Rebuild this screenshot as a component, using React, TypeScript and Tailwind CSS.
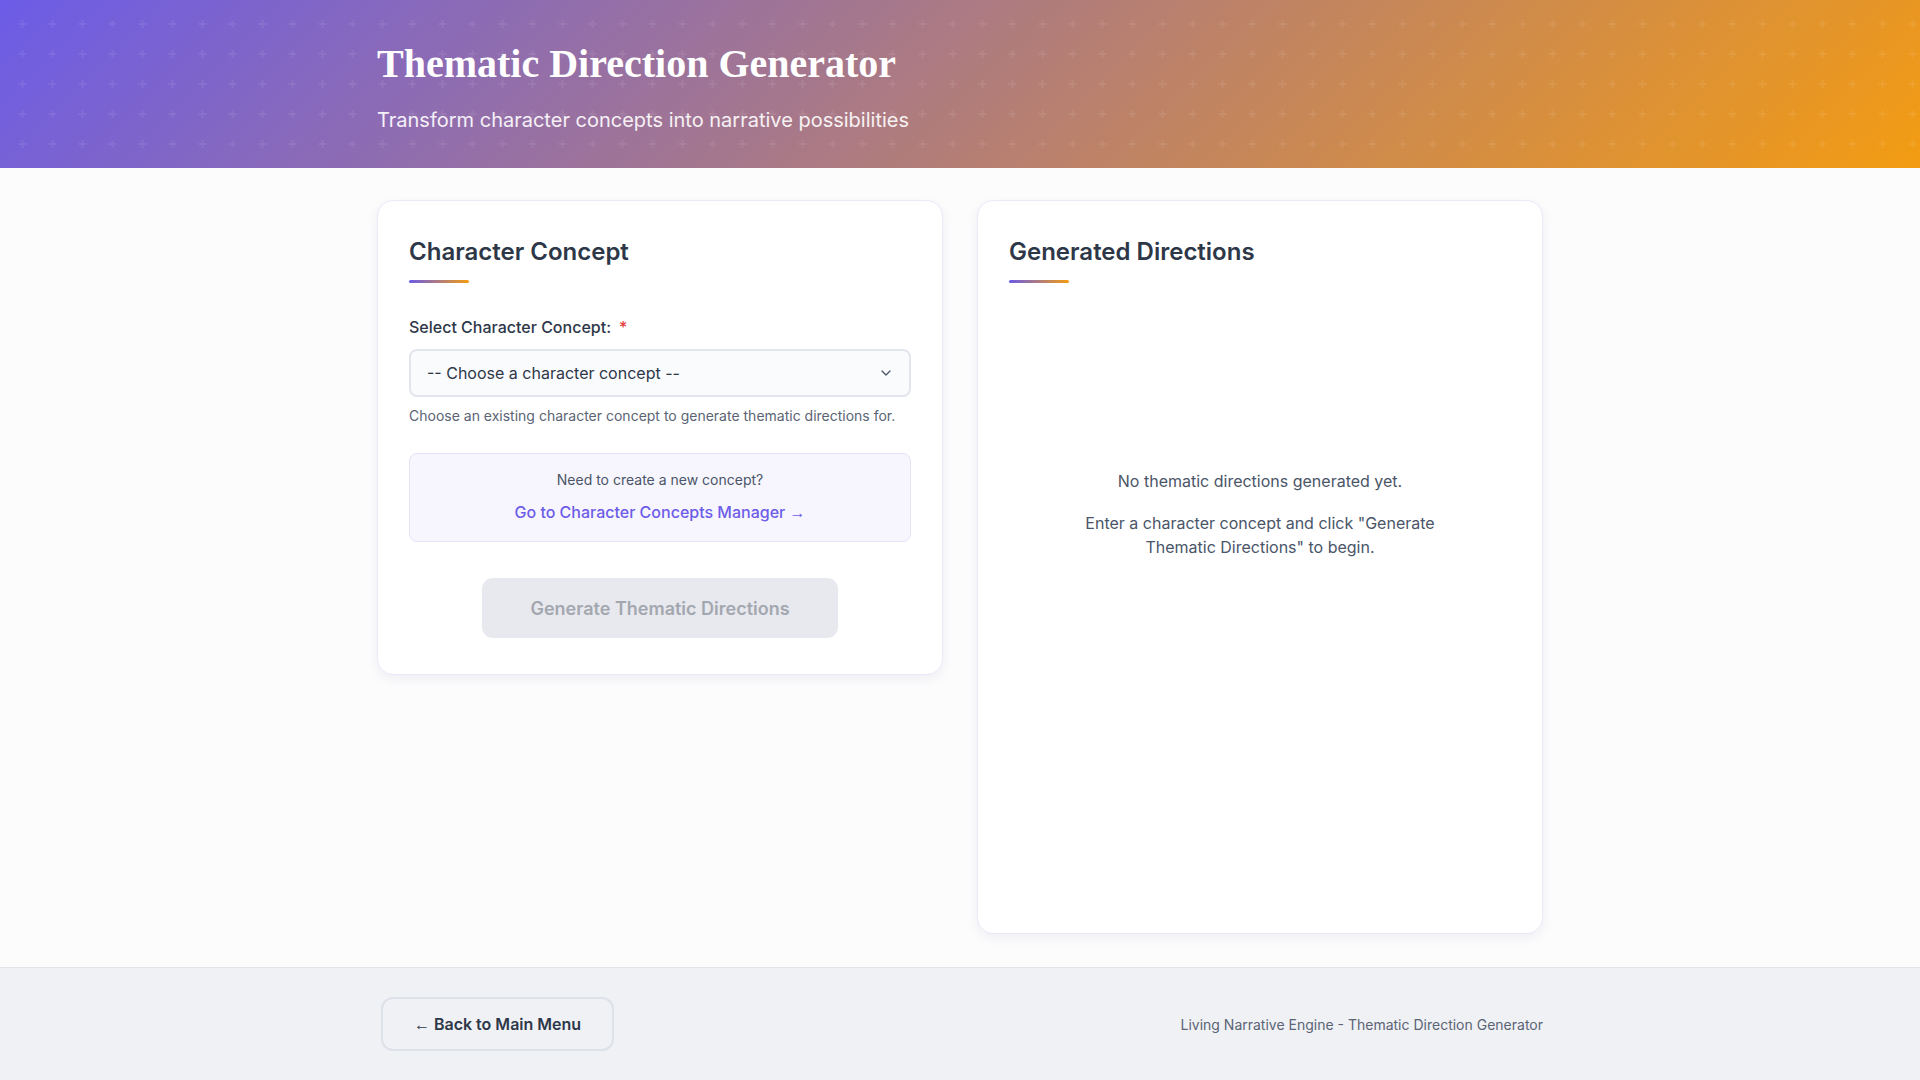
import React from 'react';

export default function App() {
  return (
    <div className="min-h-screen flex flex-col bg-[#fcfcfd] font-['Inter',sans-serif] text-[#2d3748]">
      {/* Header */}
      <header className="relative overflow-hidden bg-[linear-gradient(135deg,#6c5ce7_0%,#f39c12_100%)]">
        <svg className="absolute inset-0 w-full h-full pointer-events-none" aria-hidden="true">
          <defs>
            <pattern id="plus" x="7.5" y="9" width="30" height="30" patternUnits="userSpaceOnUse">
              <path d="M15 11v8M11 15h8" stroke="#ffffff" strokeOpacity="0.09" strokeWidth="1.5" />
            </pattern>
          </defs>
          <rect width="100%" height="100%" fill="url(#plus)" />
        </svg>
        <div className="relative w-[1166px] mx-auto pt-[40px] pb-[34px]">
          <h1 className="font-['Liberation_Serif',serif] font-bold text-[40px] leading-[48px] text-white">
            Thematic Direction Generator
          </h1>
          <p className="mt-[18px] text-[20px] leading-[28px] text-white/90">
            Transform character concepts into narrative possibilities
          </p>
        </div>
      </header>

      {/* Main */}
      <main className="flex-1 pt-[32px] pb-[32px]">
        <div className="w-[1166px] mx-auto grid grid-cols-2 gap-[34px] items-start">
          {/* Character concept card */}
          <section className="bg-white border border-[#ebe8fa] rounded-2xl shadow-[0_4px_12px_rgba(30,20,80,0.06)] p-[31px] pb-[36px]">
            <h2 className="pt-[4px] text-[24px] leading-[32px] font-semibold text-[#2d3748]">Character Concept</h2>
            <div className="mt-[12px] h-[3px] w-[60px] rounded-full bg-[linear-gradient(90deg,#6c5ce7,#f39c12)]" />

            <div className="mt-[32px] flex items-center gap-2 text-[16px] leading-[24px] font-medium">
              <span>Select Character Concept:</span>
              <span className="text-[#e53e3e]">*</span>
            </div>

            <div className="mt-[10px] h-[48px] flex items-center justify-between border-2 border-[#e2e6ec] rounded-lg bg-[#fafbfc] pl-[16px] pr-[18px]">
              <span className="text-[16px] text-[#2d3748]">-- Choose a character concept --</span>
              <svg width="10" height="6" viewBox="0 0 10 6" fill="none">
                <path d="M1 1l4 4 4-4" stroke="#4a5568" strokeWidth="1.3" strokeLinecap="round" strokeLinejoin="round" />
              </svg>
            </div>
            <p className="mt-[9px] text-[14px] leading-[20px] text-[#5a6474]">
              Choose an existing character concept to generate thematic directions for.
            </p>

            <div className="mt-[27px] border border-[#e6e2fa] bg-[#f7f6fe] rounded-lg p-4 flex flex-col items-center">
              <span className="text-[14px] leading-[20px] text-[#4a5568]">Need to create a new concept?</span>
              <span className="mt-2.5 text-[16px] leading-[24px] font-medium text-[#6c5ce7]">
                Go to Character Concepts Manager <span className="font-['Liberation_Sans',sans-serif] font-normal">→</span>
              </span>
            </div>

            <div className="mt-[36px] flex justify-center">
              <button
                disabled
                className="h-[60px] w-[356px] rounded-[11px] bg-[#e8e9ee] text-[18px] font-semibold text-[#a3a7af]"
              >
                Generate Thematic Directions
              </button>
            </div>
          </section>

          {/* Generated directions card */}
          <section className="bg-white border border-[#ebe8fa] rounded-2xl shadow-[0_4px_12px_rgba(30,20,80,0.06)] p-[31px] h-[734px]">
            <h2 className="pt-[4px] text-[24px] leading-[32px] font-semibold text-[#2d3748]">Generated Directions</h2>
            <div className="mt-[12px] h-[3px] w-[60px] rounded-full bg-[linear-gradient(90deg,#6c5ce7,#f39c12)]" />

            <div className="mt-[186px] flex flex-col items-center text-center text-[16px] leading-[24px] text-[#4a5568]">
              <p>No thematic directions generated yet.</p>
              <p className="mt-[18px] max-w-[390px]">
                Enter a character concept and click "Generate Thematic Directions" to begin.
              </p>
            </div>
          </section>
        </div>
      </main>

      {/* Footer */}
      <footer className="bg-[#f0f1f5] border-t border-[#e2e4ea] pt-[29px] pb-[29px]">
        <div className="w-[1166px] mx-auto flex items-center justify-between">
          <button className="ml-1 h-[54px] w-[233px] rounded-xl border-2 border-[#dde1e8] text-[16px] font-semibold text-[#2d3748]">
            <span className="font-['Liberation_Sans',sans-serif] font-normal">←</span> Back to Main Menu
          </button>
          <span className="text-[14px] text-[#5a6474]">Living Narrative Engine - Thematic Direction Generator</span>
        </div>
      </footer>
    </div>
  );
}
